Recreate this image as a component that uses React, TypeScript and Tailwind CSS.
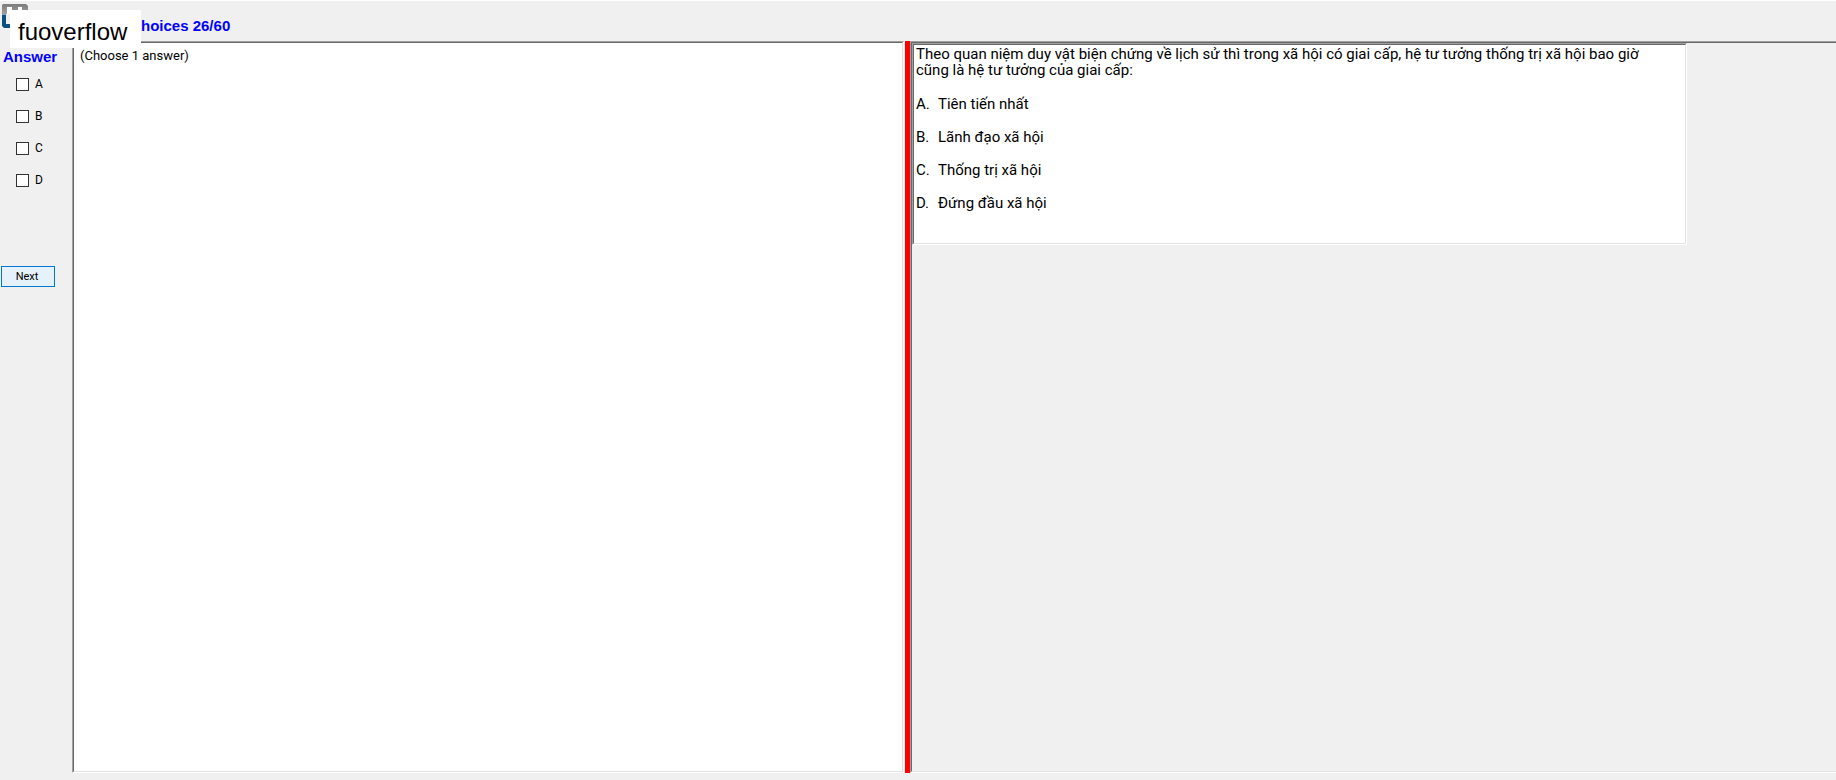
import { useState } from "react"
import { clsx } from "clsx"

const CHOICES = ["A", "B", "C", "D"]

const OPTIONS = [
  { key: "A", text: "Tiên tiến nhất" },
  { key: "B", text: "Lãnh đạo xã hội" },
  { key: "C", text: "Thống trị xã hội" },
  { key: "D", text: "Đứng đầu xã hội" },
]

// Windows style sunken 3D border, two tones on each side
function SunkenPanel({
  className,
  innerClassName,
  children,
}: {
  className?: string
  innerClassName?: string
  children?: React.ReactNode
}) {
  return (
    <div
      className={clsx(
        "flex border border-t-[#a0a0a0] border-l-[#a0a0a0] border-r-white border-b-white",
        className
      )}
    >
      <div
        className={clsx(
          "min-w-0 flex-1 border border-t-[#696969] border-l-[#696969] border-r-[#e3e3e3] border-b-[#e3e3e3]",
          innerClassName
        )}
      >
        {children}
      </div>
    </div>
  )
}

function Logo() {
  return (
    <svg className="absolute top-[3px] left-0.5" width="26" height="24" viewBox="0 0 26 24" aria-hidden="true">
      <defs>
        <linearGradient id="logo-gray" x1="0" y1="0" x2="0" y2="1">
          <stop offset="0" stopColor="#7c7c7c" />
          <stop offset="1" stopColor="#a6a6a6" />
        </linearGradient>
      </defs>
      <path d="M1 0h23l2 2v10h-6V4h-4v6H10V4H5v6H0V1z" fill="url(#logo-gray)" />
      <path d="M5 3h5v7H5zM16 3h4v7h-4z" fill="#ffffff" />
      <path d="M0 10.500h4V20h5v4H2l-2-2z" fill="#0a5082" />
    </svg>
  )
}

function Header() {
  return (
    <header className="relative flex h-[41px] items-start border-t border-white pl-2.5">
      <Logo />
      <div className="relative mt-[9px] h-[38px] w-[131px] shrink-0 bg-white pl-2 text-[24px] leading-[44px]">
        fuoverflow
      </div>
      <h1 className="pt-[15px] text-[15px] leading-5 font-bold text-[#0000ff]">hoices 26/60</h1>
    </header>
  )
}

function AnswerSidebar() {
  const [checked, setChecked] = useState<string[]>([])

  const toggle = (choice: string) =>
    setChecked((prev) =>
      prev.includes(choice) ? prev.filter((c) => c !== choice) : [...prev, choice]
    )

  return (
    <aside className="w-[72px] shrink-0 pt-1.5">
      <h2 className="pl-[3px] text-[15px] leading-5 font-bold text-[#0000ff]">Answer</h2>
      <div className="mt-[9px] flex flex-col gap-4 pl-4">
        {CHOICES.map((choice) => (
          <label key={choice} className="flex h-4 items-center gap-1.5 font-[Roboto,sans-serif] text-[12px] leading-4">
            <input
              type="checkbox"
              checked={checked.includes(choice)}
              onChange={() => toggle(choice)}
              className="size-[13px] appearance-none border border-[#333333] bg-white checked:bg-[#0078d7]"
            />
            {choice}
          </label>
        ))}
      </div>
      <button
        type="button"
        className="mt-[78px] ml-px block h-[21px] w-[54px] border border-[#0078d7] bg-[#e5f1fb] pr-0.5 font-[Roboto,sans-serif] text-[11px] leading-4"
      >
        Next
      </button>
    </aside>
  )
}

function Question() {
  return (
    <SunkenPanel
      className="w-[775px] max-w-full"
      innerClassName="h-[200px] bg-white pl-0.5 font-[Roboto,sans-serif] text-[15px]"
    >
      <p className="pt-px leading-4">
        Theo quan niệm duy vật biện chứng về lịch sử thì trong xã hội có giai cấp, hệ tư tưởng thống trị xã hội bao giờ
        <br />
        cũng là hệ tư tưởng của giai cấp:
      </p>
      <ul className="mt-[18px] flex flex-col gap-[17px] leading-4">
        {OPTIONS.map((option) => (
          <li key={option.key} className="flex">
            <span className="w-[22px]">{option.key}.</span>
            <span>{option.text}</span>
          </li>
        ))}
      </ul>
    </SunkenPanel>
  )
}

export default function App() {
  return (
    <div className="flex h-screen flex-col overflow-hidden bg-[#f0f0f0] pb-[7px] font-['Liberation_Sans',Arial,sans-serif] text-black">
      <Header />
      <main className="flex min-h-0 flex-1">
        <AnswerSidebar />
        <SunkenPanel className="mr-px w-[832px] shrink-0" innerClassName="bg-white pt-[5px] pl-1.5">
          <p className="font-[Roboto,sans-serif] text-[13px] leading-4">(Choose 1 answer)</p>
        </SunkenPanel>
        <div className="w-[5px] shrink-0 bg-[#ff0000]" />
        <SunkenPanel className="min-w-0 flex-1 border-r-0" innerClassName="border-r-0">
          <Question />
        </SunkenPanel>
      </main>
    </div>
  )
}
